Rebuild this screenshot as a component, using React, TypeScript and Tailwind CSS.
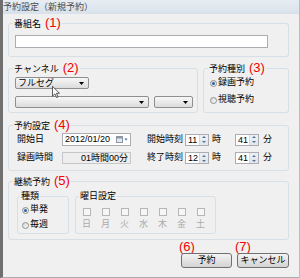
import React from "react"

function Num({ n }: { n: number }) {
  return <span className="ml-[4px] text-[13px] leading-[16px] text-[#f00000]">({n})</span>
}

function Legend({ label, n }: { label: string; n: number }) {
  return (
    <legend className="-ml-[2px] px-[1px] h-[16px] leading-[16px] whitespace-nowrap">
      {label}
      <Num n={n} />
    </legend>
  )
}

function Combo({ className, value }: { className: string; value?: string }) {
  return (
    <div
      className={`${className} h-[12px] flex items-center justify-between pl-[2px] pr-[4px] border border-[#8e8f8f] rounded-[2px] bg-linear-to-b from-[#f7f7f7] to-[#dcdcdc]`}
    >
      <span className="leading-[10px]">{value}</span>
      <svg width="5" height="3" viewBox="0 0 5 3">
        <path d="M0 0h5L2.5 3z" fill="#000" />
      </svg>
    </div>
  )
}

function Radio({ checked }: { checked?: boolean }) {
  return (
    <span className="w-[7px] h-[7px] shrink-0 rounded-full border border-[#8d8f91] bg-linear-to-br from-[#d6d6d6] to-[#fbfbfb] flex items-center justify-center">
      {checked && <span className="w-[3px] h-[3px] rounded-full bg-[#2a5fa6]" />}
    </span>
  )
}

function Spin({ value }: { value: string }) {
  return (
    <div className="w-[24px] h-[12px] flex border border-[#abadb3] bg-white">
      <span className="flex-1 pl-[2px] leading-[10px]">{value}</span>
      <div className="w-[9px] flex flex-col border-l border-[#d3d9e0]">
        <div className="flex-1 flex items-center justify-center bg-[#eaeff5]">
          <svg width="4" height="2" viewBox="0 0 4 2">
            <path d="M0 2h4L2 0z" fill="#5b7391" />
          </svg>
        </div>
        <div className="flex-1 flex items-center justify-center bg-[#e2e8ef]">
          <svg width="4" height="2" viewBox="0 0 4 2">
            <path d="M0 0h4L2 2z" fill="#5b7391" />
          </svg>
        </div>
      </div>
    </div>
  )
}

function Button({ className, label }: { className: string; label: string }) {
  return (
    <div
      className={`${className} h-[15px] border border-[#707070] rounded-[3px] bg-linear-to-b from-[#f3f3f3] to-[#d4d4d4] flex items-center justify-center`}
    >
      {label}
    </div>
  )
}

const days = ["日", "月", "火", "水", "木", "金", "土"]

export default function App() {
  return (
    <div className="relative w-[300px] h-[278px] overflow-hidden bg-[#f0f0f0] border-l-[3px] border-l-[#6f6f6f] border-r border-r-[#b9bdc2] border-b border-b-[#a9adb2] flex flex-col font-['Liberation_Sans','Noto_Sans_CJK_JP',sans-serif] text-[9px] text-black">
      {/* title bar */}
      <div className="h-[14px] shrink-0 bg-linear-to-b from-[#e7edf3] to-[#d8e1ea] leading-[14px] text-[#4b4b4b]">
        予約設定（新規予約）
      </div>

      <div className="pl-[5px] flex flex-col">
        {/* 番組名 */}
        <fieldset className="mt-[1px] w-[281px] border border-[#d5dfe5] rounded-[3px] pl-[6px] pt-[4px] pb-[8px]">
          <Legend label="番組名" n={1} />
          <div className="w-[253px] h-[13px] border border-[#abadb3] bg-white" />
        </fieldset>

        {/* チャンネル / 予約種別 */}
        <div className="mt-[3px] flex gap-[5px]">
          <fieldset className="w-[190px] border border-[#d5dfe5] rounded-[3px] pl-[6px] pt-[1px] pb-[4px]">
            <Legend label="チャンネル" n={2} />
            <Combo className="w-[74px]" value="フルセグ" />
            <div className="mt-[7px] flex gap-[5px]">
              <Combo className="w-[134px]" />
              <Combo className="w-[39px]" />
            </div>
          </fieldset>

          <fieldset className="w-[86px] border border-[#d5dfe5] rounded-[3px] pl-[6px]">
            <Legend label="予約種別" n={3} />
            <div className="flex flex-col gap-[3px]">
              <div className="flex items-center h-[14px] gap-[1px]">
                <Radio checked />
                <span>録画予約</span>
              </div>
              <div className="flex items-center h-[14px] gap-[1px]">
                <Radio />
                <span>視聴予約</span>
              </div>
            </div>
          </fieldset>
        </div>

        {/* 予約設定 */}
        <fieldset className="mt-[4px] w-[281px] border border-[#d5dfe5] rounded-[3px] pl-[6px] pb-[6px]">
          <Legend label="予約設定" n={4} />
          <div className="flex items-center h-[13px]">
            <span className="w-[47px] pl-[2px]">開始日</span>
            <div className="w-[69px] h-[13px] flex items-center border border-[#abadb3] bg-white pl-[2px] pr-[2px]">
              <span className="flex-1 leading-[11px]">2012/01/20</span>
              <svg width="12" height="7" viewBox="0 0 12 7">
                <rect x="0.5" y="0.5" width="6" height="6" fill="#e4e8ee" stroke="#8d97a3" />
                <rect x="1" y="1" width="5" height="1.5" fill="#8d97a3" />
                <path d="M8.5 2.5h3L10 4.5z" fill="#3a66a8" />
              </svg>
            </div>
            <span className="ml-[16px] w-[38px]">開始時刻</span>
            <Spin value="11" />
            <span className="ml-[3px] w-[23px]">時</span>
            <Spin value="41" />
            <span className="ml-[4px]">分</span>
          </div>
          <div className="mt-[6px] flex items-center h-[12px]">
            <span className="w-[47px] pl-[2px]">録画時間</span>
            <div className="w-[69px] h-[12px] border border-[#c5c7ca] bg-[#eeeeee] text-right pr-[2px] leading-[10px]">
              01時間00分
            </div>
            <span className="ml-[16px] w-[38px]">終了時刻</span>
            <Spin value="12" />
            <span className="ml-[3px] w-[23px]">時</span>
            <Spin value="41" />
            <span className="ml-[4px]">分</span>
          </div>
        </fieldset>

        {/* 継続予約 */}
        <fieldset className="mt-[2px] w-[281px] border border-[#d5dfe5] rounded-[3px] pl-[6px] pb-[5px]">
          <Legend label="継続予約" n={5} />
          <div className="ml-[2px] flex gap-[6px]">
            <fieldset className="w-[52px] border border-[#d5dfe5] rounded-[3px] pl-[4px] pb-[2px]">
              <legend className="-ml-[2px] px-[1px] h-[14px] leading-[14px]">種類</legend>
              <div className="pt-[1px] flex flex-col gap-[3px]">
                <div className="flex items-center h-[12px] gap-[1px]">
                  <Radio checked />
                  <span>単発</span>
                </div>
                <div className="flex items-center h-[12px] gap-[1px]">
                  <Radio />
                  <span>毎週</span>
                </div>
              </div>
            </fieldset>
            <fieldset className="w-[141px] border border-[#d5dfe5] rounded-[3px] pl-[1px] pb-[1px]">
              <legend className="ml-[2px] px-[1px] h-[14px] leading-[14px]">曜日設定</legend>
              <div className="pt-[5px] grid grid-cols-7 w-[133px]">
                {days.map((d) => (
                  <div key={d} className="flex flex-col items-center">
                    <span className="w-[8px] h-[8px] border border-[#b4b6b8] bg-[#f6f6f6]" />
                    <span className="mt-[3px] leading-[11px] text-[#a9a9a9]">{d}</span>
                  </div>
                ))}
              </div>
            </fieldset>
          </div>
        </fieldset>

        {/* buttons */}
        <div className="w-[281px] flex justify-end gap-[5px]">
          <div className="flex flex-col">
            <span className="-ml-[2px] h-[13px] text-[13px] leading-[13px] text-[#f00000]">(6)</span>
            <Button className="w-[51px]" label="予約" />
          </div>
          <div className="flex flex-col">
            <span className="-ml-[2px] h-[13px] text-[13px] leading-[13px] text-[#f00000]">(7)</span>
            <Button className="w-[52px]" label="キャンセル" />
          </div>
        </div>
      </div>

      {/* mouse pointer over the channel select */}
      <svg className="absolute left-[49px] top-[86px]" width="8" height="12" viewBox="0 0 12 19">
        <path d="M0.5 0.5V16L4.3 12.4L7 18.3L9.3 17.3L6.7 11.5H11.5Z" fill="#fff" stroke="#000" strokeWidth="1" />
      </svg>
    </div>
  )
}
